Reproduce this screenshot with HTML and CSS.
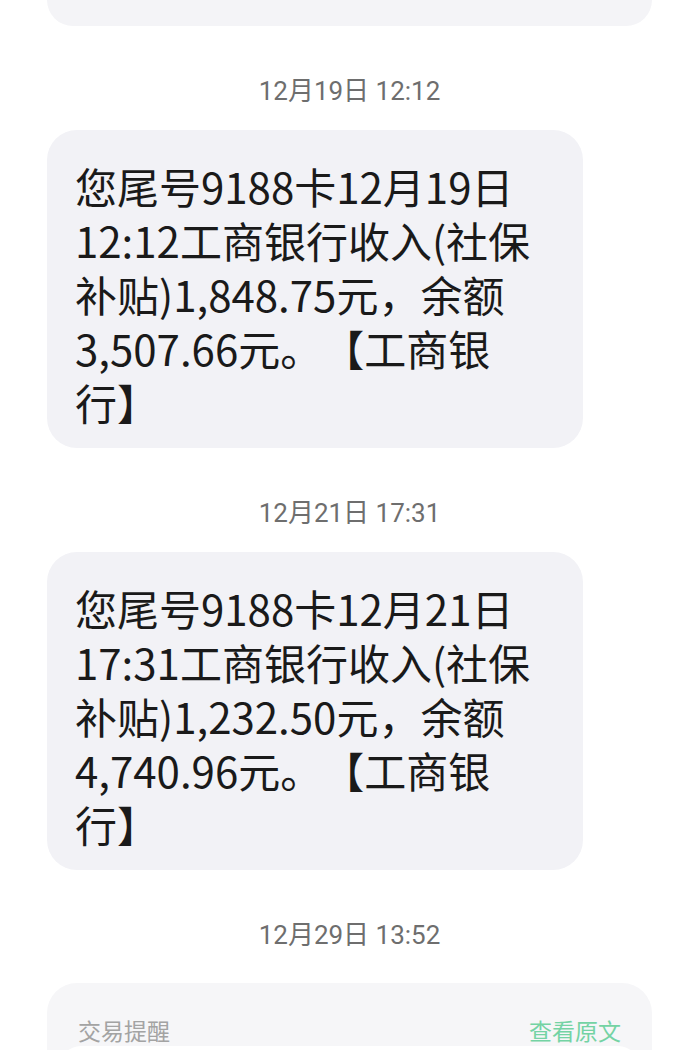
FILE: index.html
```html
<!DOCTYPE html>
<html lang="zh-CN">
<head>
  <meta charset="UTF-8" />
  <meta name="viewport" content="width=device-width, initial-scale=1" />
  <title>短信</title>
  <link rel="stylesheet" href="styles.css">
</head>
<body>

  <div class="chat">
    <div class="bubble bubble-cut"></div>

    <div class="time">12月19日 12:12</div>
    <div class="bubble">
      您尾号9188卡12月19日<br>
      12:12工商银行收入(社保<br>
      补贴)1,848.75元，余额<br>
      3,507.66元。【工商银<br>
      行】
    </div>

    <div class="time">12月21日 17:31</div>
    <div class="bubble">
      您尾号9188卡12月21日<br>
      17:31工商银行收入(社保<br>
      补贴)1,232.50元，余额<br>
      4,740.96元。【工商银<br>
      行】
    </div>

    <div class="time">12月29日 13:52</div>
    <div class="card">
      <div class="card-head">
        <span class="card-title">交易提醒</span>
        <span class="card-link">查看原文</span>
      </div>
      <div class="card-body"></div>
    </div>
  </div>

</body>
</html>
```

FILE: styles.css
```css
body {
  margin: 0;
  background: #ffffff;
  font-family: "Noto Sans CJK SC", "Noto Sans", sans-serif;
  color: #1a1a1a;
  overflow: hidden;
}
.chat {
  display: flex;
  flex-direction: column;
  align-items: flex-start;
  padding: 0 48px 0 47px;
}
.bubble {
  width: 536px;
  box-sizing: border-box;
  padding: 29px 20px 19px 28px;
  background: #f2f2f6;
  border-radius: 30px;
  font-size: 42px;
  line-height: 54px;
  white-space: nowrap;
  text-spacing-trim: space-all;
}
.bubble-cut {
  width: 605px;
  height: 26px;
  padding: 0;
  border-radius: 0 0 30px 30px;
  background: #f4f4f7;
}
.time {
  align-self: stretch;
  margin: 50px 0 24px;
  text-align: center;
  font-family: Roboto, "Noto Sans CJK SC", sans-serif;
  font-size: 26px;
  line-height: 30px;
  color: #6e6e6e;
}
.card {
  align-self: stretch;
  margin-top: 9px;
  padding-top: 32px;
  background: #f6f6f8;
  border-radius: 30px 30px 0 0;
}
.card-head {
  display: flex;
  justify-content: space-between;
  padding: 0 31px;
  font-size: 23px;
  line-height: 30px;
}
.card-title {
  color: #a3a3a3;
}
.card-link {
  color: #74d3a4;
}
.card-body {
  height: 80px;
  margin: 1px 12px 0;
  background: #ffffff;
  border-radius: 22px 22px 0 0;
}
```
